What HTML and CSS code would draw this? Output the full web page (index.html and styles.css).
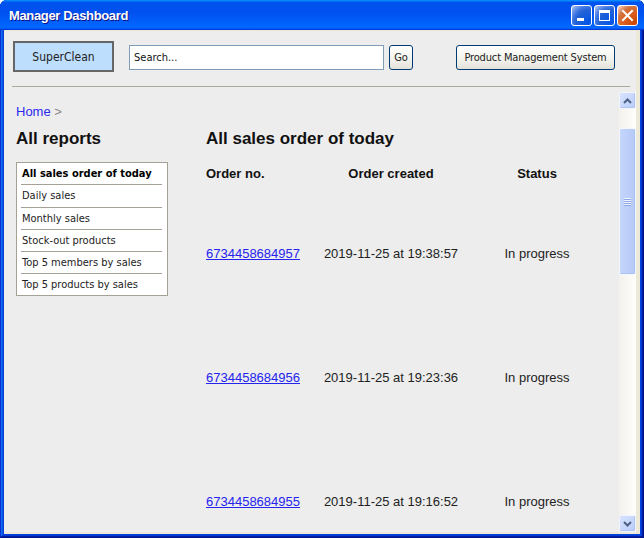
FILE: index.html
```html
<!DOCTYPE html>
<html>
<head>
<meta charset="utf-8">
<link rel="stylesheet" href="styles.css">
</head>
<body>
<div class="window">
  <div class="titlebar">
    <span class="title">Manager Dashboard</span>
    <div class="controls">
      <span class="tb"><svg width="19" height="19" viewBox="0 0 19 19"><rect x="5" y="12" width="7" height="3" fill="#fff"/></svg></span>
      <span class="tb"><svg width="19" height="19" viewBox="0 0 19 19"><rect x="4.5" y="4.5" width="10" height="10" fill="none" stroke="#fff" stroke-width="1"/><rect x="4" y="4" width="11" height="3" fill="#fff"/></svg></span>
      <span class="tb close"><svg width="19" height="19" viewBox="0 0 19 19"><path d="M5 5 L14 14 M14 5 L5 14" stroke="#fff" stroke-width="2" stroke-linecap="square"/></svg></span>
    </div>
  </div>
  <div class="client">
    <div class="app">
      <header class="toolbar">
        <button class="brand">SuperClean</button>
        <div class="search">Search...</div>
        <button class="xp-btn go">Go</button>
        <button class="xp-btn pms">Product Management System</button>
      </header>
      <div class="sep"></div>
      <div class="viewport">
        <div class="content">
          <nav class="crumbs"><a href="#">Home</a> <span class="gt">&gt;</span></nav>
          <div class="columns">
            <aside class="side">
              <h2 class="side-title">All reports</h2>
              <ul class="reports">
                <li class="active">All sales order of today</li>
                <li>Daily sales</li>
                <li>Monthly sales</li>
                <li>Stock-out products</li>
                <li>Top 5 members by sales</li>
                <li>Top 5 products by sales</li>
              </ul>
            </aside>
            <main class="main">
              <h1 class="main-title">All sales order of today</h1>
              <table class="orders">
                <thead>
                  <tr><th class="c1">Order no.</th><th class="c2">Order created</th><th class="c3">Status</th></tr>
                </thead>
                <tbody>
                  <tr><td class="c1"><a href="#">6734458684957</a></td><td class="c2">2019-11-25 at 19:38:57</td><td class="c3">In progress</td></tr>
                  <tr><td class="c1"><a href="#">6734458684956</a></td><td class="c2">2019-11-25 at 19:23:36</td><td class="c3">In progress</td></tr>
                  <tr><td class="c1"><a href="#">6734458684955</a></td><td class="c2">2019-11-25 at 19:16:52</td><td class="c3">In progress</td></tr>
                </tbody>
              </table>
            </main>
          </div>
        </div>
        <div class="scrollbar">
          <div class="sb-btn"><svg width="9" height="6" viewBox="0 0 9 6"><path d="M1 5 L4.5 1.5 L8 5" fill="none" stroke="#4D6185" stroke-width="2"/></svg></div>
          <div class="sb-track">
            <div class="sb-thumb"><span class="grip"></span></div>
          </div>
          <div class="sb-btn"><svg width="9" height="6" viewBox="0 0 9 6"><path d="M1 1 L4.5 4.5 L8 1" fill="none" stroke="#4D6185" stroke-width="2"/></svg></div>
        </div>
      </div>
    </div>
  </div>
</div>
</body>
</html>
```
FILE: styles.css
```css
* { box-sizing: border-box; }
html, body { margin: 0; padding: 0; }
body { width: 644px; height: 538px; overflow: hidden; background: #fff; }

.window {
  width: 644px;
  height: 538px;
  display: flex;
  flex-direction: column;
  background: #0842DC;
  border-radius: 7px 7px 0 0;
  box-shadow: inset -1px -1px #00138c, inset 1px 1px #0831d9, inset -2px -2px #001ea0, inset 2px 2px #166aee, inset -3px -3px #003bda, inset 3px 3px #0855dd;
}

.titlebar {
  height: 30px;
  flex: none;
  display: flex;
  align-items: center;
  justify-content: space-between;
  padding: 0 6px 0 9px;
  border-radius: 7px 7px 0 0;
  background: linear-gradient(180deg, #0997ff, #0053ee 8%, #0050ee 40%, #0066ff 88%, #0066ff 93%, #005bff 95%, #003dd7 96%, #003dd7);
}
.title {
  font-family: "Liberation Sans", Arial, sans-serif;
  font-weight: bold;
  font-size: 13px;
  color: #fff;
  text-shadow: 1px 1px #0f1089;
  letter-spacing: -0.35px;
}
.controls { display: flex; gap: 2px; margin-top: 1px; }
.tb {
  width: 21px;
  height: 21px;
  border: 1px solid #fff;
  border-radius: 3px;
  background: radial-gradient(circle at 90% 90%, #0054e9 0%, #2263d5 55%, #4479e4 70%, #a3bbec 95%, #fff 100%);
  display: flex;
  align-items: center;
  justify-content: center;
}
.tb.close {
  background: radial-gradient(circle at 90% 90%, #cc4600 0%, #dc6527 55%, #cd7546 70%, #ffccb2 95%, #fff 100%);
}

.client {
  flex: 1;
  margin: 0 4px 4px 4px;
  background: #ECE9D8;
  padding: 1px 4px 2px 0;
  display: flex;
  min-height: 0;
}
.app {
  flex: 1;
  background: #EDEDED;
  display: flex;
  flex-direction: column;
  min-height: 0;
}

.toolbar {
  display: flex;
  align-items: center;
  padding: 10px 0 14px 9px;
  font-family: "DejaVu Sans Condensed", "DejaVu Sans", sans-serif;
}
.brand {
  width: 101px;
  height: 31px;
  background: #BDDEFD;
  border: 2px solid #666;
  font-family: inherit;
  font-size: 12px;
  color: #222;
  padding: 0;
  margin-right: 15px;
}
.search {
  width: 255px;
  height: 25px;
  background: #fff;
  border: 1px solid #7F9DB9;
  font-size: 11px;
  color: #111;
  line-height: 23px;
  padding-left: 4px;
  margin: 1px 5px 0 0;
}
.xp-btn {
  height: 25px;
  border: 1px solid #003C74;
  border-radius: 3px;
  background: linear-gradient(180deg, #fff, #F2F2EC 60%, #E2E1DA);
  font-family: inherit;
  font-size: 11px;
  color: #222;
  padding: 1px 0 0 0;
  margin-top: 1px;
}
.go { width: 24px; margin-right: 43px; }
.pms { width: 159px; letter-spacing: -0.15px; }

.sep {
  height: 1px;
  background: #ACA899;
  margin: 0 6px 0 8px;
  flex: none;
}

.viewport {
  flex: 1;
  min-height: 0;
  display: flex;
}
.content {
  flex: 1;
  padding: 17px 0 0 12px;
  font-family: "Liberation Sans", Arial, sans-serif;
  overflow: hidden;
}
.crumbs {
  font-size: 13px;
  line-height: 16px;
  height: 16px;
}
.crumbs a { color: #2A2AF0; text-decoration: none; }
.crumbs .gt { color: #888; }

.columns { display: flex; gap: 38px; margin-top: 9px; }
.side { width: 152px; flex: none; }
.side-title, .main-title {
  margin: 0;
  font-size: 17px;
  line-height: 20px;
  font-weight: bold;
  color: #111;
}
.reports {
  list-style: none;
  margin: 13px 0 0 0;
  padding: 0 5px 0 4px;
  background: #fff;
  border: 1px solid #A5A195;
  font-family: "DejaVu Sans Condensed", "DejaVu Sans", sans-serif;
  font-size: 11px;
  color: #222;
}
.reports li {
  height: 22.3px;
  line-height: 21px;
  padding-left: 1px;
  border-bottom: 1px solid #A5A195;
  white-space: nowrap;
}
.reports li:last-child { border-bottom: 0; height: 20.5px; }
.reports li.active { font-weight: bold; color: #000; }

.main { flex: 1; }
.orders {
  margin-top: 6px;
  border-collapse: collapse;
  table-layout: fixed;
  width: 404px;
  font-size: 13px;
}
.orders th, .orders td { padding: 0; }
.orders th { height: 36px; font-weight: bold; color: #111; vertical-align: middle; }
.orders td { height: 124px; vertical-align: middle; color: #222; }
.orders .c1 { width: 112px; text-align: left; }
.orders .c2 { width: 146px; text-align: center; }
.orders .c3 { width: 146px; text-align: center; }
.orders a { color: #2424EE; text-decoration: underline; }

.scrollbar {
  width: 17px;
  flex: none;
  margin: 5px 0 0 0;
  display: flex;
  flex-direction: column;
  background: linear-gradient(90deg, #F3F1EC, #FEFEFB);
}
.sb-btn {
  height: 17px;
  flex: none;
  border: 1px solid #F0F4FE;
  border-radius: 2px;
  background: linear-gradient(135deg, #D8E3FE, #B9CCF8);
  display: flex;
  align-items: center;
  justify-content: center;
  box-shadow: inset -1px -1px #B0C4F2;
}
.sb-track { flex: 1; padding-top: 19px; }
.sb-thumb {
  height: 147px;
  border: 1px solid #F4F7FE;
  border-radius: 2px;
  background: linear-gradient(90deg, #C5D6FC, #BBCEF9 60%, #B6CAF7);
  box-shadow: inset -1px -1px #A9C0F2;
  display: flex;
  align-items: center;
  justify-content: center;
}
.grip {
  width: 7px;
  height: 8px;
  background: repeating-linear-gradient(180deg, #EEF3FE 0 1px, #8CA8E6 1px 2px);
}
```
